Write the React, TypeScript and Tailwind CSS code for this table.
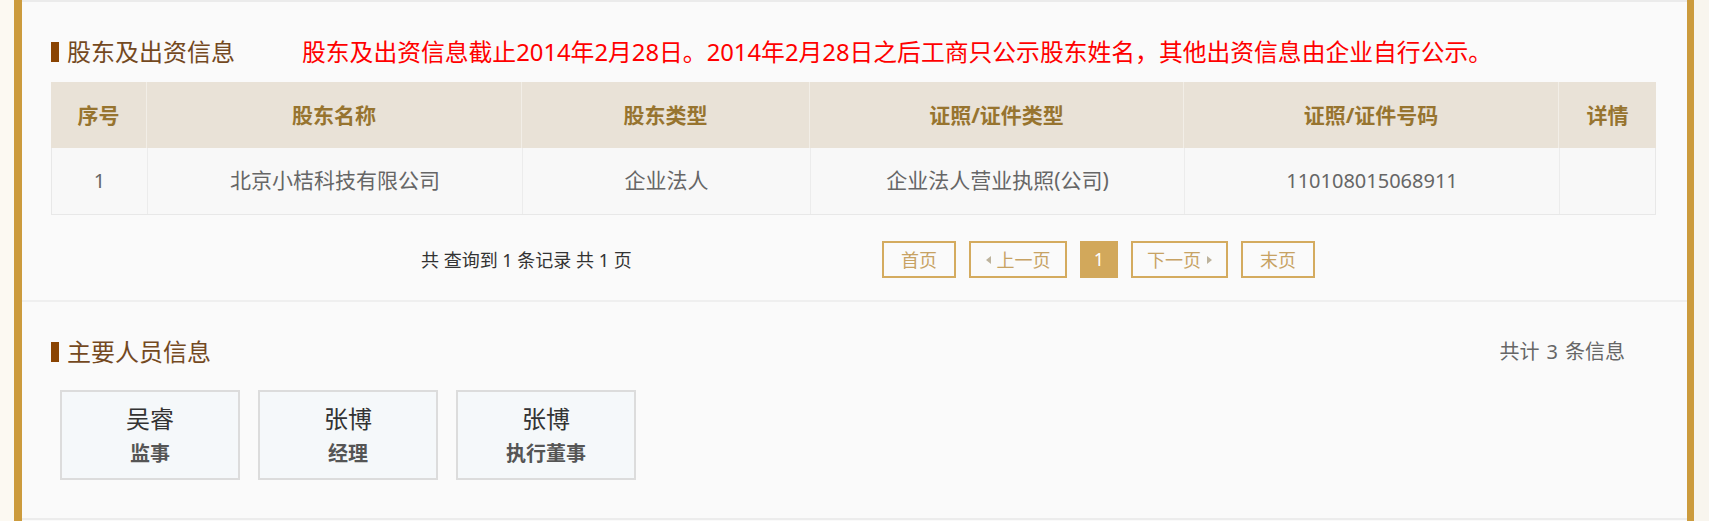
import React from "react";

const cols = "grid grid-cols-[96px_375px_288px_374px_375px_97px]";

function Heading({ children }: { children: React.ReactNode }) {
  return (
    <div className="flex items-center">
      <span className="h-[20px] w-[8px] bg-[#8a4402]" />
      <span className="ml-[8px] text-[24px] leading-[40px] text-[#74491f]">{children}</span>
    </div>
  );
}

function PageBtn({ children, w }: { children: React.ReactNode; w: string }) {
  return (
    <div
      className={`flex h-[37px] ${w} items-center justify-center border-2 border-[#d4ab5f] text-[18px] leading-[20px] text-[#c7a263]`}
    >
      {children}
    </div>
  );
}

export default function App() {
  const headers = ["序号", "股东名称", "股东类型", "证照/证件类型", "证照/证件号码", "详情"];
  const people = [
    { name: "吴睿", role: "监事" },
    { name: "张博", role: "经理" },
    { name: "张博", role: "执行董事" },
  ];
  return (
    <div className="flex h-[521px] w-[1709px] overflow-hidden bg-[#fbf8f1] font-['Noto_Sans','Noto_Sans_CJK_SC',sans-serif]">
      <div className="w-[14px] shrink-0 bg-[#fcf9f2]" />
      <div className="w-[8px] shrink-0 bg-[#cc9b3d]" />
      <div className="flex w-[1665px] shrink-0 flex-col bg-[#fafafa]">
        <div className="h-[2px] bg-[#ebebeb]" />
        <section className="pt-[30px]">
          <div className="flex h-[40px] items-center pl-[29px]">
            <Heading>股东及出资信息</Heading>
            <span className="ml-[67px] text-[23.8px] leading-[40px] text-[#f00]">
              股东及出资信息截止2014年2月28日。2014年2月28日之后工商只公示股东姓名，其他出资信息由企业自行公示。
            </span>
          </div>
          <div className="ml-[29px] mt-[10px] w-[1605px]">
            <div className={`${cols} h-[66px] bg-[#e9e2d7]`}>
              {headers.map((h, i) => (
                <div
                  key={h}
                  className={`flex items-center justify-center text-[21px] font-bold leading-[24px] text-[#97742f] ${
                    i < headers.length - 1 ? "border-r border-[#f2eee7]" : ""
                  }`}
                >
                  {h}
                </div>
              ))}
            </div>
            <div className={`${cols} h-[67px] border-x border-b border-[#e8e8e8] bg-[#f8f8f8] text-[#666]`}>
              <div className="flex items-center justify-center border-r border-[#ececec] text-[20px]">1</div>
              <div className="flex items-center justify-center border-r border-[#ececec] text-[21px]">北京小桔科技有限公司</div>
              <div className="flex items-center justify-center border-r border-[#ececec] text-[21px]">企业法人</div>
              <div className="flex items-center justify-center border-r border-[#ececec] text-[21px]">企业法人营业执照(公司)</div>
              <div className="flex items-center justify-center border-r border-[#ececec] text-[20px]">110108015068911</div>
              <div />
            </div>
          </div>
          <div className="mt-[26px] flex h-[37px] items-center">
            <div className="w-[860px] whitespace-pre pl-[399px] text-[18px] leading-[24px] text-[#333]">
              共 查询到 1 条记录 共 1 页
            </div>
            <div className="flex items-center gap-[13px]">
              <PageBtn w="w-[74px]">首页</PageBtn>
              <PageBtn w="w-[98px]">
                <span className="mr-[6px] h-0 w-0 border-y-[4px] border-r-[5px] border-y-transparent border-r-[#bdb39c]" />
                上一页
              </PageBtn>
              <div className="flex h-[37px] w-[38px] items-center justify-center bg-[#d2a85b] text-[18px] text-white">1</div>
              <PageBtn w="w-[97px]">
                下一页
                <span className="ml-[6px] h-0 w-0 border-y-[4px] border-l-[5px] border-y-transparent border-l-[#bdb39c]" />
              </PageBtn>
              <PageBtn w="w-[74px]">末页</PageBtn>
            </div>
          </div>
          <div className="mt-[22px] h-[2px] bg-[#efefef]" />
        </section>
        <section className="pt-[30px]">
          <div className="flex h-[40px] items-center justify-between pl-[29px] pr-[62px]">
            <Heading>主要人员信息</Heading>
            <span className="flex items-center text-[20px] leading-[24px] text-[#666]">
              共计<span className="mx-[7px]">3</span>条信息
            </span>
          </div>
          <div className="mt-[18px] flex gap-[18px] pl-[38px]">
            {people.map((p, i) => (
              <div
                key={i}
                className="flex h-[90px] w-[180px] flex-col items-center border-2 border-[#dcdcdc] bg-[#f5f8fa] pt-[15px]"
              >
                <div className="text-[24px] leading-[24px] text-[#333]">{p.name}</div>
                <div className="mt-[11px] text-[20px] font-bold leading-[24px] text-[#555]">{p.role}</div>
              </div>
            ))}
          </div>
          <div className="mt-[38px] h-[2px] bg-[#ececec]" />
        </section>
      </div>
      <div className="w-[7px] shrink-0 bg-[#cc9b3d]" />
      <div className="flex-1 bg-[#f8f5ee]" />
    </div>
  );
}
